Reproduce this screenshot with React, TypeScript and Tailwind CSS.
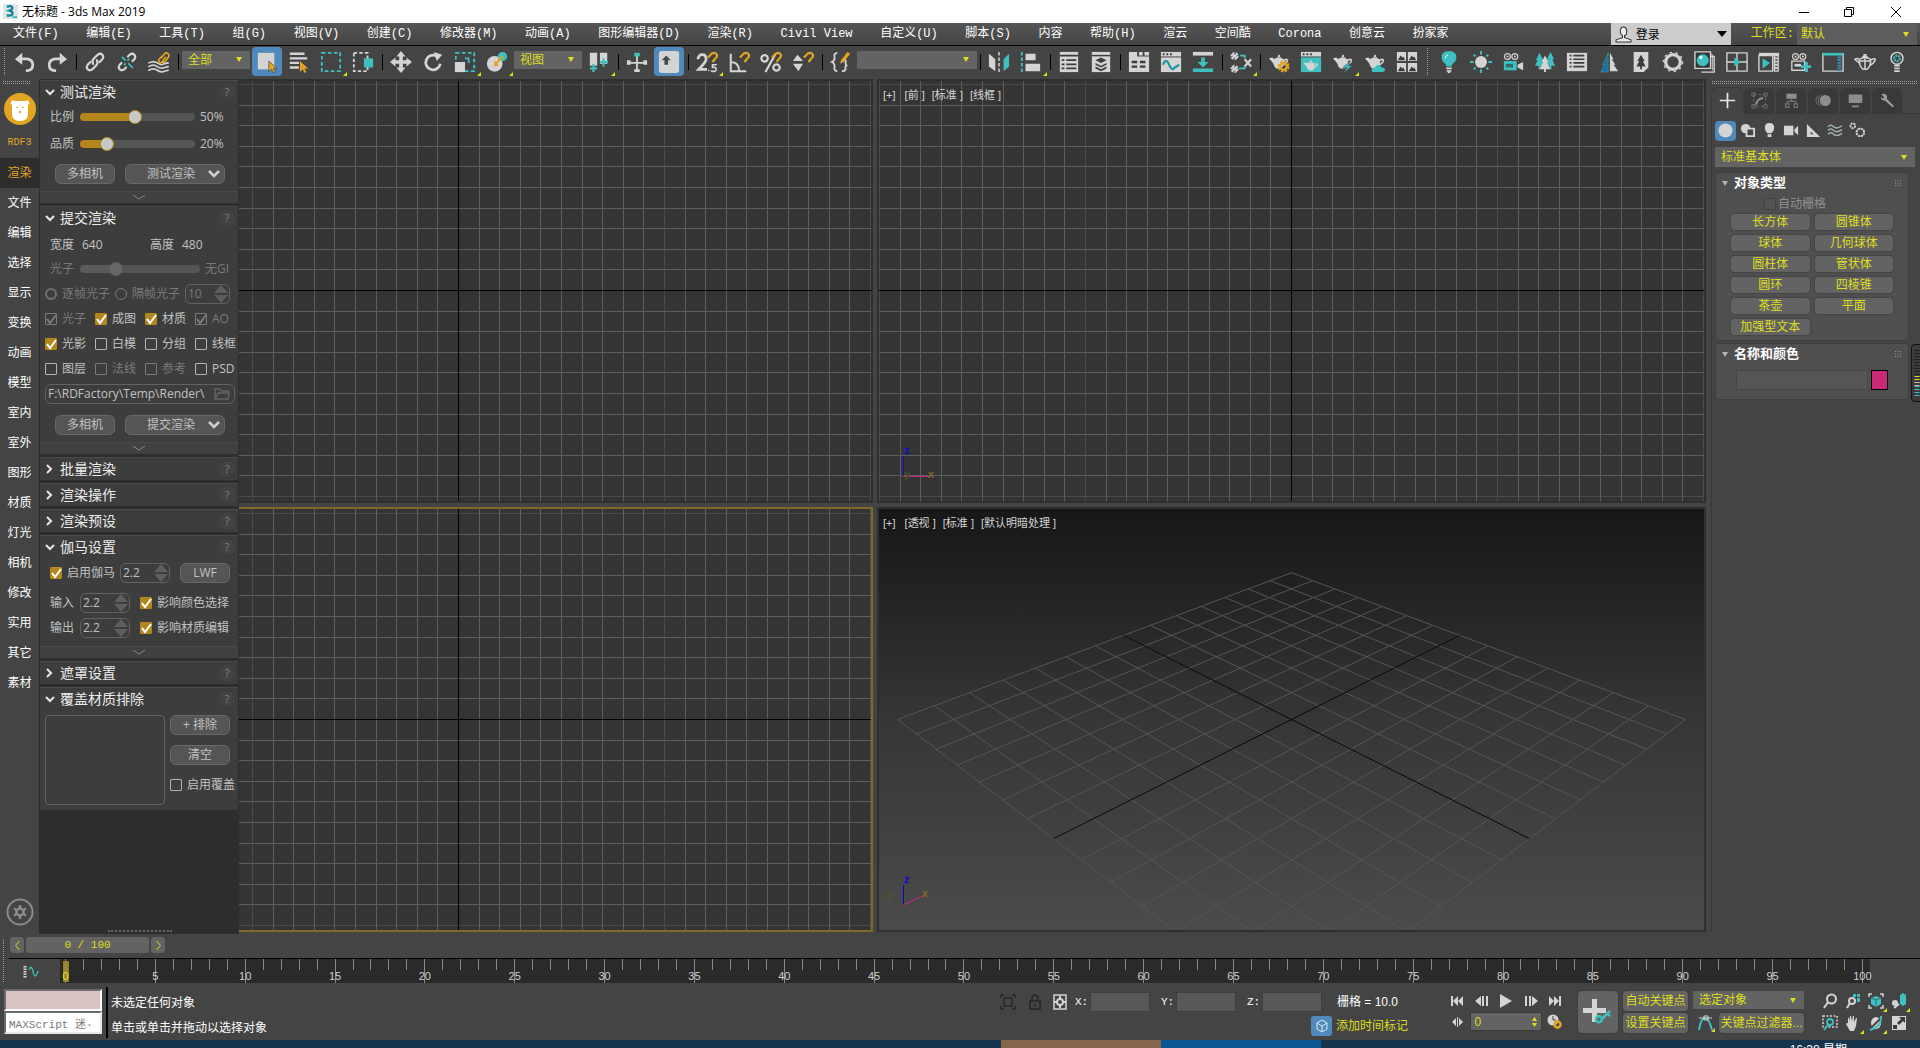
import React, { useState } from "react";

const W = "#d4d4d4";
const T = "#3fc0c0";
const G = "#e2a521";

const teapot = (
  <>
    <path d="M1 8l4-1 4 5-1 4zM9 7l2-1 0-2h2v2l2 1z" fill={W} />
    <path d="M6 9q6-4 11 0 2 6-3 10H9Q5 16 6 9z" fill={W} />
    <path d="M17 10q5-2 4 1t-6 5" fill="none" stroke={W} strokeWidth="1.8" />
  </>
);

const magnet = <path d="M13 7l4-4q3-2 5 0t0 4l-4 5" fill="none" stroke={G} strokeWidth="2.4" />;

const camera = (
  <>
    <circle cx="6" cy="6" r="3.2" fill="none" stroke={W} strokeWidth="1.3" />
    <circle cx="14" cy="6" r="3.2" fill="none" stroke={W} strokeWidth="1.3" />
    <path d="M6 6h.1M14 6h.1" stroke={W} strokeWidth="2" strokeLinecap="round" />
  </>
);

const icons: Record<string, React.ReactNode> = {
  undo: <path d="M1 9l8-7v5h5q8 1 8 8t-7 8h-2v-3h2q4-1 4-5t-5-5H9v5z" fill={W} />,
  redo: <path d="M23 9l-8-7v5h-5q-8 1-8 8t7 8h2v-3H9q-4-1-4-5t5-5h5v5z" fill={W} />,
  link: (
    <g fill="none" stroke={W} strokeWidth="2.4" strokeLinecap="round">
      <path d="M10 14q-2-3 1-6l4-4q3-2 5 0t0 5l-3 3" />
      <path d="M14 10q2 3-1 6l-4 4q-3 2-5 0t0-5l3-3" />
    </g>
  ),
  unlink: (
    <g fill="none" strokeWidth="2.4" strokeLinecap="round">
      <path d="M13 6l2-2q3-2 5 0t0 5l-2 2M11 18l-2 2q-3 2-5 0t0-5l2-2" stroke={W} />
      <path d="M7 7l3 3M14 14l4 4M14 9l-1 1M9 15l1-1" stroke={T} strokeWidth="1.8" />
    </g>
  ),
  bindWave: (
    <g fill="none" strokeLinecap="round">
      <path d="M1 13q5-3 9 0t7 1l5-1M1 17q5-3 9 0t8 1l4-1M1 21q5-3 9 0t8 1l4-1" stroke={W} strokeWidth="1.8" />
      <path d="M15 7l3-4q2-2 4 0t0 4l-3 4q-2 2-4 1M19 7l-4 5q-2 2-3 0t1-4l2-2" stroke={G} strokeWidth="1.8" />
    </g>
  ),
  selectObj: (
    <>
      <path d="M2 2h18v18H2z" fill={W} />
      <path d="M14 11v12l3-3 2 4 2-1-2-4h4z" fill={G} stroke="#3f3f3f" strokeWidth=".7" />
    </>
  ),
  selectName: (
    <>
      <path d="M2 3h16M2 8h19M2 13h10M2 18h10" stroke={W} strokeWidth="2.6" />
      <path d="M13 11v12l3-3 2 4 2-1-2-4h4z" fill={G} />
    </>
  ),
  rectRegion: <path d="M2 2h20v20H2z" fill="none" stroke={T} strokeWidth="2" strokeDasharray="4 2.6" />,
  windowCross: (
    <>
      <path d="M2 2h15v20H2z" fill="none" stroke={W} strokeWidth="2" strokeDasharray="3.6 2.4" />
      <path d="M13 8h10v10H13z" fill={T} />
    </>
  ),
  move: <path d="M12 0l5 6h-3v4h4V7l6 5-6 5v-3h-4v4h3l-5 6-5-6h3v-4H6v3l-6-5 6-5v3h4V6H7z" fill={W} />,
  rotate: (
    <>
      <path d="M16 5.500A8 8 0 1 0 20 14" fill="none" stroke={W} strokeWidth="3" />
      <path d="M13 1l9 3-6 7z" fill={W} />
    </>
  ),
  scale: (
    <>
      <path d="M2 2h20v20H2z" fill="none" stroke={T} strokeWidth="2" strokeDasharray="4 2.6" />
      <path d="M1 12h11v11H1z" fill={W} />
      <path d="M12 8h4v5" fill="none" stroke={T} strokeWidth="1.8" />
    </>
  ),
  place: (
    <>
      <circle cx="9.500" cy="14" r="8.500" fill={W} />
      <circle cx="18" cy="6" r="5" fill={T} />
      <path d="M9 17v-7l2 2 6-7 2 2-7 7 2 2z" fill={G} />
    </>
  ),
  pivot: (
    <>
      <path d="M2 2h8v14H2zM13 2h8v12h-8z" fill={W} />
      <path d="M6 14v9M2 19h8M17 8v9M13 12h9" stroke={T} strokeWidth="2.4" />
    </>
  ),
  manipulate: (
    <>
      <path d="M12 5v17M3 13h18" stroke={W} strokeWidth="2" />
      <path d="M9 2h6v4H9z" fill={T} />
      <path d="M1 10h4v5H1zM19 10h4v5h-4zM9 20h6v3H9z" fill={W} />
    </>
  ),
  keyboard: (
    <>
      <rect x="1" y="0" width="22" height="24" rx="3" fill={W} />
      <path d="M9 5l5 5h-3v5H7v-5H4z" fill="#484848" />
    </>
  ),
  snap: (
    <>
      <path d="M2 9q1-5 5-5t4 5q0 3-8 11h9" fill="none" stroke={W} strokeWidth="3" />
      <path d="M14 21h.1M22 15h-4v3q4-1 4 2t-5 2" fill="none" stroke={W} strokeWidth="1.8" strokeLinecap="round" />
      {magnet}
    </>
  ),
  angle: (
    <>
      <path d="M3 3v19h17M3 12q9 0 9 10" fill="none" stroke={W} strokeWidth="2.200" />
      {magnet}
    </>
  ),
  percent: (
    <>
      <path d="M17 3L6 23" stroke={W} strokeWidth="2.4" />
      <circle cx="5" cy="8" r="3.500" fill="none" stroke={W} strokeWidth="2.4" />
      <circle cx="18" cy="18" r="3.500" fill="none" stroke={W} strokeWidth="2.4" />
      {magnet}
    </>
  ),
  spinnerSnap: (
    <>
      <path d="M1 11l5-7 6 7zM1 14h11l-5 8z" fill={W} />
      {magnet}
    </>
  ),
  namedSets: (
    <>
      <path d="M8 2q-4 0-3 5 0 4-3 5 3 1 3 5-1 5 3 5M14 9q4 0 3 4 0 3 2 3-3 0-2 3 0 3-4 3" fill="none" stroke={W} strokeWidth="2" />
      <path d="M11 14l1-4 7-9 3 2-7 9z" fill={G} />
    </>
  ),
  mirror: (
    <>
      <path d="M1 3l7 6v13l-7-5z" fill={W} />
      <path d="M23 3l-6 6v13l6-5z" fill={T} />
      <path d="M12 1v22" stroke={W} strokeWidth="1.6" strokeDasharray="4 2" />
    </>
  ),
  align: (
    <>
      <path d="M2 1v22" stroke={T} strokeWidth="2" strokeDasharray="4 2" />
      <path d="M6 3h11v7H6zM6 14h16v8H6z" fill={W} />
    </>
  ),
  sceneExplorer: (
    <>
      <path d="M2 1h20v22H2z" fill={W} />
      <path d="M2 5h20M4 10h3M9 10h11M4 14.500h3M9 14.500h11M4 19h3M9 19h11" stroke="#3c3c3c" strokeWidth="2" />
    </>
  ),
  layers: (
    <>
      <path d="M2 1h20v22H2z" fill={W} />
      <path d="M2 5h20" stroke="#3c3c3c" strokeWidth="1.600" />
      <path d="M12 7l6 3-6 3-6-3zM6 13l6 3 6-3v2l-6 3-6-3zM6 17l6 3 6-3v2l-6 3-6-3z" fill="#3c3c3c" />
    </>
  ),
  ribbon: (
    <>
      <path d="M1 1h9v5H1zM12 1h4v4h-4zM18 1h5v4h-5zM1 6h22v17H1z" fill={W} />
      <path d="M4 12h6M13 12h6M4 17h6M13 17h6" stroke="#3c3c3c" strokeWidth="2.6" />
    </>
  ),
  curve: (
    <>
      <path d="M1 1h22v22H1z" fill={W} />
      <path d="M3 3.500h2M7 3.500h2M11 3.500h2" stroke="#3c3c3c" strokeWidth="2" />
      <path d="M1 6.500h22" stroke="#3c3c3c" />
      <path d="M3 15q3-7 6-2 4 10 7 5l5-3" fill="none" stroke="#1f93a6" strokeWidth="2.4" />
    </>
  ),
  schematic: (
    <>
      <path d="M1 1h22v4H1z" fill={W} />
      <path d="M1 19h22v4H1zM10 7h4v5h4l-6 6-6-6h4z" fill={T} />
    </>
  ),
  material: (
    <g fill="none" strokeWidth="1.8">
      <path d="M2 3l6 5M8 3l-6 5M2 17l6 5M8 17l-6 5M16 9l7 8M23 9l-7 8" stroke={W} strokeWidth="2.400" />
      <path d="M11 5h5v3M10 19h6v-3" stroke={T} strokeWidth="2" />
      <circle cx="5" cy="5.500" r="3.500" stroke={W} strokeDasharray="2 1.500" />
      <circle cx="5" cy="19.500" r="3.500" stroke={W} strokeDasharray="2 1.500" />
    </g>
  ),
  renderSetup: (
    <>
      {teapot}
      <circle cx="17" cy="17" r="5" fill="none" stroke={G} strokeWidth="3" strokeDasharray="2.500 1.400" />
      <circle cx="17" cy="17" r="3.500" fill="none" stroke={G} strokeWidth="2.400" />
    </>
  ),
  renderFrame: (
    <>
      <path d="M1 1h22v5H1z" fill={W} />
      <path d="M3 3.500h2M7 3.500h2M11 3.500h2" stroke="#3c3c3c" strokeWidth="2" />
      <path d="M1 7h22v16H1z" fill={T} />
      <g transform="translate(3 7) scale(.75)">{teapot}</g>
    </>
  ),
  renderProd: (
    <>
      {teapot}
      <path d="M20 11l-8 7h4l-3 6 9-8h-4z" fill={T} stroke="#454545" strokeWidth=".6" />
    </>
  ),
  renderCloud: (
    <>
      {teapot}
      <path d="M10 23q-3-1-1-4 1-1 3-1 2-5 6-2 1 1 1 2 4 0 4 3-1 2-3 2z" fill={T} />
    </>
  ),
  gallery: (
    <>
      <path d="M1 1h10v10H1zM13 1h10v10H13zM1 13h10v10H1zM13 13h10v10H13z" fill={W} />
      <path d="M2 10l3-5 2 2 1-1 2 4zM14 10l3-5 2 2 1-1 2 4zM2 22l3-5 2 2 1-1 2 4zM14 22l3-5 2 2 1-1 2 4z" fill="#3c3c3c" />
    </>
  ),
  bulb: (
    <>
      <path d="M12 0q8 0 8 7 0 4-4 7-1 1-1 3H9q0-2-1-3-4-3-4-7 0-7 8-7z" fill={T} />
      <path d="M9 18h6v2H9zM9 21h6l-2 3h-2z" fill={W} />
      <path d="M8 8q0-3 3-4" stroke="#fff" fill="none" />
    </>
  ),
  sun: (
    <>
      <circle cx="12" cy="12" r="6.500" fill={W} />
      <path d="M12 0v4M12 20v4M0 12h4M20 12h4M4 4l2 2M18 18l2 2M4 20l2-2M18 6l2-2" stroke={T} strokeWidth="2" />
    </>
  ),
  vcam: (
    <>
      {camera}
      <path d="M2 11h14v10H2z" fill={T} />
      <path d="M4 14h8v4H4z" fill="#2d6f70" />
      <path d="M17 15l6-3v9l-6-3z" fill={W} />
    </>
  ),
  trees: (
    <>
      <path d="M6 2l4 8H8l3 6H7v4H5v-4H1l3-6H2zM18 1l4 8h-2l3 7h-4v4h-2v-4h-4l3-7h-2z" fill={T} />
      <path d="M12 5l4 7h-2l4 8h-5v3h-2v-3H6l4-8H8z" fill={W} />
    </>
  ),
  listPanel: (
    <>
      <path d="M1 2h22v20H1z" fill={W} />
      <path d="M4 5h2M8 5h12M4 9h2M8 9h12M4 13h2M8 13h12M4 17h2M8 17h12" stroke="#3c3c3c" strokeWidth="1.8" />
    </>
  ),
  halfTree: (
    <>
      <path d="M11 2v21H3l4-8H5l4-8z" fill="#1f6fa0" stroke={T} strokeDasharray="1 1.500" />
      <path d="M13 2l4 7h-2l4 6h-2l5 7h-9z" fill={W} />
    </>
  ),
  treeCard: (
    <>
      <path d="M4 1h16v17l-5 5H4z" fill={W} />
      <path d="M12 4l4 7h-2l3 6h-4v3h-2v-3H7l3-6H8z" fill="#3c3c3c" />
    </>
  ),
  ring: (
    <>
      <circle cx="12" cy="12" r="8" fill="none" stroke={W} strokeWidth="3.600" />
      <circle cx="12" cy="12" r="10.500" fill="none" stroke={W} strokeWidth="1.500" strokeDasharray="2.500 4" />
    </>
  ),
  sphereStack: (
    <>
      <path d="M6 6h16v17H8" fill="none" stroke={W} strokeWidth="1.5" />
      <path d="M4 4h16v17" fill="none" stroke={W} />
      <path d="M1 1h17v18H1z" fill="#333" stroke={W} strokeWidth="1.5" />
      <circle cx="9.500" cy="10" r="6.500" fill={T} />
      <circle cx="7.500" cy="7" r="1.800" fill="#e9ffff" />
    </>
  ),
  playGrid: (
    <>
      <path d="M1 2h22v20H1zM12 2v20M1 12h22" fill="none" stroke={W} strokeWidth="1.5" />
      <path d="M9 7l7 5-7 5z" fill={T} />
    </>
  ),
  playPanel: (
    <>
      <path d="M1 2h22v3H1z" fill={W} />
      <path d="M1 5h15v17H1zM18 5h4v17h-4z" fill="none" stroke={W} strokeWidth="1.500" />
      <path d="M5 8l8 5-8 6z" fill={T} />
      <path d="M20 7v14" stroke={W} strokeWidth="3" strokeDasharray="2 1.500" />
    </>
  ),
  addCam: (
    <>
      {camera}
      <path d="M2 11h14v10H2z" fill="none" stroke={W} strokeWidth="1.500" />
      <path d="M5 14h7v3H5z" fill={W} />
      <path d="M18 12v11M12 17h11" stroke={T} strokeWidth="3" />
    </>
  ),
  sidePanel: (
    <>
      <path d="M1 3h22v19H1z" fill="none" stroke={W} strokeWidth="1.500" />
      <path d="M1 2h22v3H1z" fill={T} />
      <path d="M19 6v16" stroke="#3c8fc0" strokeWidth="4" strokeDasharray="2 1" />
    </>
  ),
  teapotLine: (
    <g fill="none" stroke={W} strokeWidth="1.600">
      <path d="M6 9q6-4 12 0 1 7-4 11h-4Q5 16 6 9zM9 7l2-1V4h2v2l2 1M7 14L1 9l3-1 2 2M18 10q6-3 5 0t-6 6M12 7v13M6 11h12" />
    </g>
  ),
  bulbGear: (
    <>
      <circle cx="12" cy="8" r="6.500" fill="none" stroke={W} strokeWidth="1.600" />
      <circle cx="12" cy="8" r="3" fill="none" stroke={T} strokeWidth="2.500" strokeDasharray="2 1" />
      <path d="M9 16h6M9 19h6M9 22h6" stroke={W} strokeWidth="2" />
    </>
  ),
};

const Icon = ({ name, size = 24 }: { name: string; size?: number }) => (
  <svg viewBox="0 0 24 24" width={size} height={size} aria-hidden="true">
    {icons[name]}
  </svg>
);

// "|" is a separator, ":" is a dotted grip, a leading "*" is a pressed tool, a trailing "+" has a flyout
const toolbar = [
  "undo", "redo", "|", "link", "unlink", "bindWave", "|", "combo:全部", "*selectObj", "selectName", "rectRegion+",
  "windowCross", "|", "move", "rotate", "scale+", "place+", "combo:视图", "pivot+", "|", "manipulate", "*keyboard", "|",
  "snap+", "angle", "percent", "spinnerSnap", "|", "namedSets", "combo:", "|", "mirror", "align+", "|", "sceneExplorer",
  "layers", "|", "ribbon", "curve", "schematic", "|", "material+", "|", "renderSetup", "renderFrame", "renderProd+",
  "renderCloud", "gallery", ":", "bulb", "sun", "vcam", "trees", "listPanel", "halfTree", "treeCard", "ring",
  "sphereStack", "playGrid", "playPanel", "addCam", "sidePanel", "teapotLine", "bulbGear",
];

const menus = [
  "文件(F)", "编辑(E)", "工具(T)", "组(G)", "视图(V)", "创建(C)", "修改器(M)", "动画(A)", "图形编辑器(D)", "渲染(R)",
  "Civil View", "自定义(U)", "脚本(S)", "内容", "帮助(H)", "渲云", "空间酷", "Corona", "创意云", "扮家家",
];

const sideTabs = [
  "渲染", "文件", "编辑", "选择", "显示", "变换", "动画", "模型", "室内",
  "室外", "图形", "材质", "灯光", "相机", "修改", "实用", "其它", "素材",
];

const primitives = ["长方体", "圆锥体", "球体", "几何球体", "圆柱体", "管状体", "圆环", "四棱锥", "茶壶", "平面", "加强型文本"];

// fine dotted handle used to drag docked bars
const Grip = ({ className }: { className: string }) => (
  <span className={`bg-[conic-gradient(#a0a0a0_25%,transparent_0)] bg-[length:2px_2px] ${className}`} />
);

interface ComboProps {
  label: string;
  value: string;
  className?: string;
}

const Combo = ({ label, value, className = "" }: ComboProps) => (
  <div className={`grid items-center ${className}`}>
    <select
      aria-label={label}
      className="h-full w-full min-w-0 appearance-none bg-[#636363] pl-1.5 text-[12px] leading-4 text-[#dfdf1e] [grid-area:1/1]"
    >
      <option>{value}</option>
    </select>
    <svg viewBox="0 0 6 5" width="6" height="5" className="pointer-events-none mr-2 justify-self-end [grid-area:1/1]">
      <path d="M0 0h6L3 5z" fill="#dfdf1e" />
    </svg>
  </div>
);

const TitleBar = () => (
  <header className="flex h-[23px] shrink-0 items-center bg-white pl-[3px] text-black">
    <svg viewBox="0 0 16 16" width="15" height="15">
      <path d="M0 0h16v16H0z" fill="#dfe6ea" />
      <path d="M4 3q5-2 6 1 0 2-3 3 4 1 3 4-2 2-6 1" fill="none" stroke="#15839a" strokeWidth="2.500" />
      <path d="M10 13h5v2h-5z" fill="#35c0c0" />
    </svg>
    <h1 className="ml-1 flex-1 font-['Open_Sans','Noto_Sans_CJK_SC',sans-serif] text-[12px] leading-5">无标题 - 3ds Max 2019</h1>
    <div className="flex">
      <button aria-label="最小化" className="grid h-5 w-[45px] place-items-center">
        <svg width="10" height="10"><path d="M0 5.500h10" stroke="#000" /></svg>
      </button>
      <button aria-label="还原" className="grid h-5 w-[45px] place-items-center">
        <svg width="10" height="10" fill="none" stroke="#000"><path d="M.5 2.500h7v7h-7zM2.500 2.500v-2h7v7h-2" /></svg>
      </button>
      <button aria-label="关闭" className="grid h-5 w-[49px] place-items-center">
        <svg width="10" height="10" stroke="#000"><path d="M0 0l10 10M10 0L0 10" /></svg>
      </button>
    </div>
  </header>
);

const MenuBar = () => (
  <nav className="flex h-[23px] shrink-0 border-b border-black bg-linear-to-b from-[#565656] to-[#444444]">
    <div className="flex flex-1 items-center justify-between pr-[162px] pb-px pl-[13px] font-['Liberation_Mono','Noto_Sans_CJK_SC',monospace] text-[12px] leading-4 text-white">
      {menus.map((menu) => (
        <button key={menu} className="whitespace-nowrap">{menu}</button>
      ))}
    </div>
    <button className="flex w-[120px] items-center bg-[#cccccc] pl-1 text-[12px] text-black">
      <svg viewBox="0 0 16 16" width="17" height="17" fill="#eee" stroke="#333">
        <path d="M5 5q0-4 3-4t3 4-2 4v2l6 2v2H1v-2l6-2V9Q5 8 5 5z" />
      </svg>
      <span className="mt-0.5 ml-1 flex-1 text-left">登录</span>
      <svg width="10" height="6" className="mr-1"><path d="M0 0h10L5 6z" /></svg>
    </button>
    <label htmlFor="workspace" className="pl-5 font-['Liberation_Mono','Noto_Sans_CJK_SC',monospace] text-[12px] leading-[22px] text-[#dfdf1e]">工作区:</label>
    <div className="mr-[3px] ml-[3px] grid w-[120px] items-center">
      <select id="workspace" className="h-full appearance-none bg-[#5d5d5d] pl-1 text-[12px] text-[#dfdf1e] [grid-area:1/1]">
        <option>默认</option>
      </select>
      <svg width="6" height="5" className="pointer-events-none mr-2 justify-self-end [grid-area:1/1]"><path d="M0 0h6L3 5z" fill="#dfdf1e" /></svg>
    </div>
  </nav>
);

const Toolbar = () => (
  <div className="flex h-[33px] shrink-0 items-center bg-[#444444] pb-0.5 pl-[3px]">
    <Grip className="mr-[3px] h-[27px] w-[3px]" />
    {toolbar.map((item, i) => {
      if (item === "|") {
        return (
          <span key={i} className="flex w-1.5 justify-center">
            <span className="h-4 w-px bg-black" />
          </span>
        );
      }
      if (item === ":") {
        return <Grip key={i} className="mr-1 ml-[3px] h-[27px] w-[3px]" />;
      }
      if (item.startsWith("combo:")) {
        const value = item.slice(6);
        return (
          <Combo
            key={i}
            label={value || "命名选择集"}
            value={value}
            className={value ? "mx-px mb-1 h-[18px] w-[68px]" : "mb-1 h-[18px] w-[120px]"}
          />
        );
      }
      const pressed = item.startsWith("*");
      const name = item.replace("*", "").replace("+", "");
      return (
        <button key={i} aria-label={name} className="relative grid h-[31px] w-8 shrink-0 place-items-center">
          <span className={`grid h-[29px] w-[30px] place-items-center rounded-sm ${pressed ? "bg-[#5089bb]" : ""}`}>
            <Icon name={name} size={22} />
          </span>
          {item.endsWith("+") && (
            <svg width="4" height="4" className="absolute right-0 bottom-px"><path d="M4 0v4H0z" fill="#dfdf1e" /></svg>
          )}
        </button>
      );
    })}
  </div>
);

const SideStrip = () => (
  <aside className="flex w-10 shrink-0 flex-col items-center border-r border-[#2d2d2d] bg-[#444444]">
    <Grip className="mt-0.5 mb-[9px] ml-0.5 h-[3px] w-7 shrink-0 self-start" />
    <svg viewBox="0 0 32 32" width="32" height="32" className="shrink-0">
      <circle cx="16" cy="16" r="16" fill="#e3a622" />
      <path d="M7 9q1-3 4-1h10q3-2 4 1 1 2-1 3v10q-1 6-8 6t-8-6V12q-2-1-1-3z" fill="#fff" />
      <path d="M12 14h2v1h-2zM18 14h2v1h-2zM15 18h2v2h-2z" fill="#e3a622" />
    </svg>
    <span className="mt-[3px] font-['Liberation_Mono',monospace] text-[10px] leading-[30px] text-[#e3a622]">RDF3</span>
    {sideTabs.map((tab, i) => (
      <button
        key={tab}
        className={`w-full text-[12px] leading-[30px] ${i === 0 ? "bg-[#2d2d2d] text-[#e3a622]" : "text-white"}`}
      >
        {tab}
      </button>
    ))}
    <button aria-label="设置" className="mt-auto mb-2">
      <svg viewBox="0 0 28 28" width="28" height="28" fill="none" stroke="#8b8b8b">
        <circle cx="14" cy="14" r="12.500" strokeWidth="2" />
        <circle cx="14" cy="14" r="3.500" strokeWidth="2.500" />
        <path d="M14 7v3M14 18v3M8 10.500l2.500 1.500M17.500 16l2.500 1.500M8 17.500l2.500-1.500M17.500 12l2.500-1.500" strokeWidth="2.500" />
      </svg>
    </button>
  </aside>
);

interface CheckProps {
  label: string;
  checked?: boolean;
  dim?: boolean;
}

const Check = ({ label, checked = false, dim = false }: CheckProps) => {
  const [on, setOn] = useState(checked);
  const border = dim ? "border-[#7b7b7b]" : on ? "border-[#b3871c] bg-[#b3871c]" : "border-[#b4b4b4]";
  return (
    <label className={`flex items-center gap-[5px] whitespace-nowrap ${dim ? "text-[#7a7a7a]" : ""}`}>
      <span className="grid">
        <input
          type="checkbox"
          checked={on}
          disabled={dim}
          onChange={() => setOn(!on)}
          className={`h-3 w-3 appearance-none rounded-[1px] border [grid-area:1/1] ${border}`}
        />
        {on && (
          <svg width="12" height="12" fill="none" stroke={dim ? "#7b7b7b" : "#fff"} strokeWidth="2" className="pointer-events-none [grid-area:1/1]">
            <path d="M2 6l3 4 6-8" />
          </svg>
        )}
      </span>
      {label}
    </label>
  );
};

const Spin = ({ label, value, dim = false }: { label: string; value: string; dim?: boolean }) => (
  <div className={`flex h-5 items-center rounded-md border border-[#626262] pr-px ${dim ? "w-[45px] text-[#7a7a7a]" : "w-[50px]"}`}>
    <input aria-label={label} defaultValue={value} disabled={dim} className="w-0 min-w-0 flex-1 pl-0.5" />
    <svg width="14" height="18" fill="#5e5e5e"><path d="M0 8l7-8 7 8zM0 10h14l-7 8z" /></svg>
  </div>
);

const Slider = ({ label, value, dim = false }: { label: string; value: number; dim?: boolean }) => {
  const [pos, setPos] = useState(value);
  const fill = dim ? "#5a5a5a" : "#b3871c";
  return (
    <input
      type="range"
      aria-label={label}
      value={pos}
      disabled={dim}
      onChange={(e) => setPos(Number(e.target.value))}
      style={{ background: `linear-gradient(to right, ${fill} ${pos}%, #555555 ${pos}%)` }}
      className={`h-2 min-w-0 flex-1 appearance-none rounded-full [&::-webkit-slider-thumb]:h-3.5 [&::-webkit-slider-thumb]:w-3.5 [&::-webkit-slider-thumb]:appearance-none [&::-webkit-slider-thumb]:rounded-full [&::-webkit-slider-thumb]:border ${
        dim
          ? "[&::-webkit-slider-thumb]:border-[#5f5f5f] [&::-webkit-slider-thumb]:bg-[#666666]"
          : "[&::-webkit-slider-thumb]:border-[#b3871c] [&::-webkit-slider-thumb]:bg-[#c9c9c9]"
      }`}
    />
  );
};

const Pill = ({ children, className = "" }: { children: React.ReactNode; className?: string }) => (
  <button className={`flex h-5 items-center justify-center rounded-md border border-[#686868] bg-[#555555] ${className}`}>{children}</button>
);

const RenderButtons = ({ label }: { label: string }) => (
  <div className="flex gap-2.5 pl-2.5">
    <Pill className="w-[60px]">多相机</Pill>
    <Pill className="w-[100px]">
      <span className="flex-1 pl-2">{label}</span>
      <svg width="12" height="8" className="mr-1" fill="none" stroke="#d0d0d0" strokeWidth="2.500"><path d="M1 1l5 5 5-5" /></svg>
    </Pill>
  </div>
);

interface SectionProps {
  title: string;
  more?: boolean;
  children?: React.ReactNode;
}

const Section = ({ title, more = false, children }: SectionProps) => (
  <section className="mb-[3px] border-t border-[#4a4a4a] bg-[#3d3d3d]">
    <div className="flex h-[22px] items-center pr-[3px] pl-[5px]">
      <svg width="10" height="10" fill="none" stroke="#e8e8e8" strokeWidth="2">
        <path d={children ? "M1 3l4 4 4-4" : "M2 1l4 4-4 4"} />
      </svg>
      <h2 className="ml-[5px] flex-1 text-[14px] leading-[22px] text-[#ececec]">{title}</h2>
      <button aria-label={`${title}帮助`} className="h-4 w-4 rounded-full bg-[#424242] text-[11px] leading-4 text-[#808080]">?</button>
    </div>
    {children && <div className="pl-[5px]">{children}</div>}
    {more && (
      <button aria-label="展开" className="grid h-3 w-full place-items-center border-t border-[#4a4a4a] bg-[#414141]">
        <svg width="12" height="5" fill="none" stroke="#888"><path d="M0 0l6 4 6-4" /></svg>
      </button>
    )}
  </section>
);

const RenderPanel = () => (
  <div className="flex w-[199px] shrink-0 flex-col bg-[#2d2d2d] pt-px pr-px font-['Open_Sans','Noto_Sans_CJK_SC',sans-serif] text-[12px] leading-4 text-[#c2c2c2]">
    <Section title="测试渲染" more>
      <div className="flex h-[28px] items-center pl-[5px]">
        <span className="w-[30px]">比例</span>
        <Slider label="比例" value={48} />
        <span className="w-[43px] pl-[5px]">50%</span>
      </div>
      <div className="flex h-[25px] items-center pl-[5px]">
        <span className="w-[30px]">品质</span>
        <Slider label="品质" value={20} />
        <span className="w-[43px] pl-[5px]">20%</span>
      </div>
      <div className="pt-2 pb-[7px]"><RenderButtons label="测试渲染" /></div>
    </Section>

    <Section title="提交渲染" more>
      <div className="flex h-8 items-center pl-[5px]">
        <label htmlFor="rw" className="w-8">宽度</label>
        <input id="rw" defaultValue="640" className="w-[68px] min-w-0" />
        <label htmlFor="rh" className="w-8">高度</label>
        <input id="rh" defaultValue="480" className="w-12 min-w-0" />
      </div>
      <div className="flex h-4 items-center pl-[5px] text-[#7a7a7a]">
        <span className="w-[30px]">光子</span>
        <Slider label="光子" value={27} dim />
        <span className="w-[38px] pl-[5px] whitespace-nowrap">无GI</span>
      </div>
      <div className="mt-[7px] flex h-5 items-center text-[#7a7a7a]">
        <label className="flex w-[70px] items-center gap-[5px] whitespace-nowrap">
          <input type="radio" name="photon" disabled className="h-3 w-3 appearance-none rounded-full border-2 border-[#6d7272]" />
          逐帧光子
        </label>
        <label className="flex w-[70px] items-center gap-[5px] whitespace-nowrap">
          <input type="radio" name="photon" disabled className="h-3 w-3 appearance-none rounded-full border border-[#7b7b7b]" />
          隔帧光子
        </label>
        <Spin label="隔帧数" value="10" dim />
      </div>
      <div className="grid grid-cols-[50px_50px_50px_43px] pt-0.5">
        {["光子!x", "成图x", "材质x", "AO!x", "光影x", "白模", "分组", "线框", "图层", "法线!", "参考!", "PSD"].map((item) => (
          <div key={item} className="flex h-[25px] items-center">
            <Check label={item.replace(/[!x]/g, "")} checked={item.endsWith("x")} dim={item.includes("!")} />
          </div>
        ))}
      </div>
      <div className="mt-[3px] flex h-5 w-[190px] items-center rounded-md border border-[#626262] pr-1 pl-0.5">
        <input aria-label="输出路径" defaultValue="F:\RDFactory\Temp\Render\" className="min-w-0 flex-1" />
        <svg width="16" height="14" fill="none" stroke="#626262" strokeWidth="1.500"><path d="M1 12V2h5l1 2h7v2M1 12h13l1-6H4z" /></svg>
      </div>
      <div className="pt-[11px] pb-[7px]"><RenderButtons label="提交渲染" /></div>
    </Section>

    <Section title="批量渲染" />
    <Section title="渲染操作" />
    <Section title="渲染预设" />

    <Section title="伽马设置" more>
      <div className="flex items-center pt-[5px] pl-[5px]">
        <div className="w-[70px]"><Check label="启用伽马" checked /></div>
        <Spin label="伽马" value="2.2" />
        <Pill className="ml-2.5 w-[50px]">LWF</Pill>
      </div>
      <div className="mt-2.5 flex items-center pl-[5px]">
        <span className="w-[30px]">输入</span>
        <Spin label="输入" value="2.2" />
        <div className="ml-2.5"><Check label="影响颜色选择" checked /></div>
      </div>
      <div className="mt-[5px] flex items-center pb-2 pl-[5px]">
        <span className="w-[30px]">输出</span>
        <Spin label="输出" value="2.2" />
        <div className="ml-2.5"><Check label="影响材质编辑" checked /></div>
      </div>
    </Section>

    <Section title="遮罩设置" />

    <Section title="覆盖材质排除">
      <div className="flex gap-[5px] pt-[5px] pb-[5px]">
        <div className="h-[90px] w-[120px] rounded-sm border border-[#626262]" />
        <div className="flex flex-col gap-2.5">
          <Pill className="w-[60px]">+ 排除</Pill>
          <Pill className="w-[60px]">清空</Pill>
          <div className="pt-0.5"><Check label="启用覆盖" /></div>
        </div>
      </div>
    </Section>
    <span className="mt-auto mb-0.5 ml-[68px] h-0.5 w-16 border-t-2 border-dotted border-[#666666]" />
  </div>
);

const steps = Array.from({ length: 81 }, (_, i) => i - 40);

// world grid seen straight on; every tenth line is drawn darker
const FlatGrid = ({ x, y }: { x: number; y: number }) => (
  <svg width="100%" height="100%" className="absolute inset-0" shapeRendering="crispEdges">
    {[...steps.filter((n) => n % 10 === 0), ...steps.filter((n) => n % 10 !== 0)].map((n) => {
      const d = Math.round(n * 20.6) + 0.5;
      const color = n % 10 === 0 ? "#4a4a4a" : "#5e5e5e";
      return (
        <g key={n} stroke={color}>
          <path d={`M${x + d} 0v900`} />
          <path d={`M0 ${y + d}h1600`} />
        </g>
      );
    })}
    <path d={`M${x + 0.5} 0v900M0 ${y + 0.5}h1600`} stroke="#000" />
  </svg>
);

const project = (u: number, v: number) => {
  const depth = 1 - 0.0246 * (u + v);
  return `${412.5 + (28.14 * (u - v)) / depth} ${210.5 + (14.09 * (u + v)) / depth}`;
};

const PerspectiveGrid = () => (
  <svg width="100%" height="100%" className="absolute inset-0">
    <g stroke="#555555">
      {Array.from({ length: 15 }, (_, i) => i - 7).map((n) => (
        <path key={n} d={`M${project(n, -7)}L${project(n, 7)}M${project(-7, n)}L${project(7, n)}`} />
      ))}
    </g>
    <path d={`M${project(0, -7)}L${project(0, 7)}M${project(-7, 0)}L${project(7, 0)}`} stroke="#000" />
  </svg>
);

const ViewLabels = ({ labels }: { labels: string[] }) => (
  <div className="relative flex gap-[7px] pt-1.5 pl-1 text-[11px] leading-4 text-[#d4d4d4]">
    {labels.map((label) => (
      <button key={label} className="whitespace-nowrap first:pr-0.5">[{label}]</button>
    ))}
  </div>
);

const AxisTripod = ({ perspective = false }: { perspective?: boolean }) => (
  <svg width="54" height="46" className="absolute bottom-[13px] left-1 font-['Liberation_Sans',sans-serif] text-[11px] font-bold">
    <path d="M20.500 34V14" stroke="#0b0bc4" />
    <path d={perspective ? "M20 34l20-9" : "M20 34.500h26"} stroke="#c92a78" />
    {perspective && <path d="M20 34l-12-6" stroke="#3c4f2c" />}
    <text x="21" y="12" fill="#0b0bd8">z</text>
    <text x={perspective ? 39 : 45} y={perspective ? 26 : 36} fill="#85692a">x</text>
    <text x={perspective ? 4 : 21} y={perspective ? 27 : 36} fill="#3f5c28">y</text>
  </svg>
);

const Viewports = () => (
  <main className="mb-0.5 grid min-w-0 flex-1 grid-cols-[634fr_829fr] grid-rows-[424fr_425fr] gap-1">
    <div className="relative overflow-hidden border-2 border-l-0 border-[#2f2f2f] bg-[#343434]">
      <FlatGrid x={219} y={209} />
    </div>
    <div className="relative overflow-hidden border-2 border-[#2f2f2f] bg-[#343434]">
      <FlatGrid x={412} y={209} />
      <ViewLabels labels={["+", "前 ", "标准 ", "线框 "]} />
      <AxisTripod />
    </div>
    <div className="relative overflow-hidden border-2 border-l-0 border-[#7f692c] bg-[#343434]">
      <FlatGrid x={219} y={210} />
    </div>
    <div className="relative overflow-hidden border-2 border-[#2f2f2f] bg-linear-to-b from-[#171717] via-[#363636] to-[#4b4b4b]">
      <PerspectiveGrid />
      <ViewLabels labels={["+", "透视 ", "标准 ", "默认明暗处理 "]} />
      <AxisTripod perspective />
    </div>
  </main>
);

const dimStroke = "#8d8d8d";

const panelTabs: { name: string; art: React.ReactNode }[] = [
  { name: "创建", art: <path d="M10 1v18M1 10h18" stroke="#e8e8e8" strokeWidth="2" /> },
  {
    name: "修改",
    art: (
      <g fill="none" stroke="#6d7475">
        <path d="M3 3h14v14H3z" strokeDasharray="3 3" />
        <path d="M1 1h4v4H1zM15 1h4v4h-4zM1 15h4v4H1zM15 15h4v4h-4z" />
        <path d="M6 15q1-7 8-8" stroke={dimStroke} strokeWidth="2.500" />
      </g>
    ),
  },
  {
    name: "层次",
    art: (
      <>
        <path d="M4 2h12v6H4z" fill={dimStroke} />
        <path d="M10 8v3M5 14v-3h10v3M3 14h4v4H3zM13 14h4v4h-4z" fill="none" stroke="#6d7475" strokeWidth="1.500" />
      </>
    ),
  },
  {
    name: "运动",
    art: (
      <>
        <circle cx="12" cy="10" r="6.500" fill={dimStroke} />
        <path d="M7 3q-7 7 0 14M4 4q-6 6 0 12" fill="none" stroke="#727272" />
      </>
    ),
  },
  { name: "显示", art: <path d="M2 3h16v10H2zM6 16h8v2H6z" fill={dimStroke} /> },
  { name: "实用程序", art: <path d="M3 3q3-2 6 1 1 2 0 4l8 8q1 2-1 2l-9-8q-4 1-5-4l3 2 1-2z" fill="#a0a0a0" /> },
];

const createKinds: { name: string; art: React.ReactNode }[] = [
  { name: "几何体", art: <circle cx="9" cy="9" r="7.500" fill={W} /> },
  {
    name: "图形",
    art: (
      <>
        <circle cx="7" cy="7" r="5" fill={W} />
        <path d="M8 7h8v8H8z" fill="none" stroke={W} strokeWidth="2" />
        <path d="M9 8h4l-1 4H9z" fill="#454545" />
      </>
    ),
  },
  { name: "灯光", art: <path d="M9 1q5 0 5 5 0 3-3 6H7Q4 9 4 6q0-5 5-5zM7 13h4v3H7z" fill={W} /> },
  { name: "摄影机", art: <path d="M1 4h10v10H1zM12 8l4-4v10l-4-4z" fill={W} /> },
  {
    name: "辅助对象",
    art: (
      <>
        <path d="M2 2v14h14z" fill={W} />
        <path d="M6 10v3h3z" fill="#454545" />
      </>
    ),
  },
  {
    name: "空间扭曲",
    art: <path d="M1 5q3-3 6 0t9-1M1 9q3-3 6 0t9-1M1 13q3-3 6 0t9-1" fill="none" stroke="#a5b5b5" strokeWidth="1.500" />,
  },
  {
    name: "系统",
    art: (
      <g fill="none" stroke={W} strokeWidth="2">
        <circle cx="4" cy="4" r="2.500" strokeDasharray="2 .8" />
        <circle cx="12" cy="11" r="4" strokeDasharray="2.500 .6" />
      </g>
    ),
  },
];

const Rollout = ({ title, children }: { title: string; children: React.ReactNode }) => (
  <section className="rounded-sm border border-[#3e3e3e] bg-[#4f4f4f]">
    <div className="flex h-5 items-center pr-[7px] pl-1.5">
      <svg width="6" height="5"><path d="M0 0h6L3 5z" fill="#b4b4b4" /></svg>
      <h2 className="ml-1.5 flex-1 text-[13px] leading-5 font-bold text-white">{title}</h2>
      <svg width="6" height="6" stroke="#989898" strokeDasharray="1 1.500"><path d="M0 .5h6M0 3h6M0 5.500h6" /></svg>
    </div>
    {children}
  </section>
);

const CommandPanel = () => (
  <aside className="mb-0.5 flex w-[214px] shrink-0 flex-col bg-[#444444] pl-[5px]">
    <Grip className="mt-0.5 mr-[3px] h-[3px]" />
    <div className="mt-[3px] flex">
      {panelTabs.map(({ name, art }, i) => (
        <button
          key={name}
          aria-label={name}
          className={`grid h-[27px] w-8 place-items-center rounded-t-md border ${
            i === 0 ? "border-[#3a3a3a] border-b-[#444444]" : "border-[#444444] border-b-[#383838] bg-[#393939]"
          }`}
        >
          <svg viewBox="0 0 20 20" width="17" height="17">{art}</svg>
        </button>
      ))}
      <span className="flex-1 border-b border-[#383838]" />
    </div>
    <div className="relative flex-1 border-l border-[#383838] pr-[5px] pl-[3px]">
      <div className="mb-0.5 flex h-[31px] items-center gap-px pt-0.5">
        {createKinds.map(({ name, art }, i) => (
          <button key={name} aria-label={name} className={`grid h-5 w-[21px] place-items-center rounded-sm ${i === 0 ? "bg-[#5089bb]" : ""}`}>
            <svg viewBox="0 0 18 18" width="17" height="17">{art}</svg>
          </button>
        ))}
      </div>
      <Combo label="类别" value="标准基本体" className="h-5" />
      <div className="mt-[5px] mr-1.5 flex flex-col gap-0.5">
        <Rollout title="对象类型">
          <label className="flex h-[21px] items-center gap-0.5 pl-12 text-[12px] text-[#8f8f8f]">
            <input type="checkbox" disabled className="h-3 w-3 appearance-none border border-[#444444] bg-[#525252]" />
            自动栅格
          </label>
          <div className="grid grid-cols-2 gap-x-[5px] gap-y-[5px] px-[15px] pb-[5px] text-[12px] leading-4 text-[#dfdf1e]">
            {primitives.map((name) => (
              <button key={name} className="h-4 rounded-[3px] bg-[#636363] outline outline-[#464646]">{name}</button>
            ))}
          </div>
        </Rollout>
        <Rollout title="名称和颜色">
          <div className="flex gap-[3px] px-5 pt-1.5 pb-[9px]">
            <input aria-label="名称" className="h-5 min-w-0 flex-1 border border-[#484848] bg-[#555555]" />
            <button aria-label="颜色" className="h-5 w-[17px] border border-black bg-[#c92a78]" />
          </div>
        </Rollout>
      </div>
      <svg width="9" height="58" className="absolute top-[230px] right-0">
        <rect x=".5" y=".5" width="14" height="57" rx="3" fill="#3a3a3a" stroke="#111" />
        <path d="M6 6v26" stroke="#1c1c1c" strokeWidth="5" strokeDasharray="1 2" />
        <path d="M6 32v7" stroke="#dfdf1e" strokeWidth="5" strokeDasharray="1 2" />
        <path d="M6 38v4" stroke="#bbb" strokeWidth="5" strokeDasharray="1 2" />
        <path d="M6 42v10" stroke={T} strokeWidth="5" strokeDasharray="1 2" />
      </svg>
    </div>
  </aside>
);

const Timeline = () => (
  <div className="flex h-[50px] shrink-0 bg-[#444444] pl-0.5">
    <Grip className="mt-[5px] mr-1 h-[43px] w-[3px]" />
    <div className="flex min-w-0 flex-1 flex-col">
      <div className="flex h-6 gap-0.5 pt-[3px] pl-px font-['Liberation_Mono',monospace] text-[11px] leading-4 text-[#dfdf1e]">
        <button aria-label="上一关键点" className="grid h-4 w-3.5 place-items-center rounded-[3px] bg-[#636363]">
          <svg width="5" height="9" fill="none" stroke="#dfdf1e"><path d="M4.500 0l-4 4.500 4 4.500" /></svg>
        </button>
        <button className="h-4 w-[123px] rounded-[3px] bg-[#636363]">0 / 100</button>
        <button aria-label="下一关键点" className="grid h-4 w-3.5 place-items-center rounded-[3px] bg-[#636363]">
          <svg width="5" height="9" fill="none" stroke="#dfdf1e"><path d="M.5 0l4 4.500L.5 9" /></svg>
        </button>
      </div>
      <div className="flex flex-1 border-t border-black">
        <button aria-label="迷你曲线编辑器" className="grid w-[51px] place-items-center pr-2">
          <svg width="16" height="14" fill="none">
            <path d="M2 1v12" stroke={W} strokeWidth="3" strokeDasharray="1.500 1" />
            <path d="M6 5q2-6 4 1 1 8 4 3l1-3" stroke={T} strokeWidth="1.300" />
          </svg>
        </button>
        <div className="relative mr-[50px] mb-px flex flex-1 justify-between bg-[#2a2a2a] pr-[7px] pl-[5px]">
          <span className="absolute top-px bottom-0 left-0.5 w-2 border border-[#2a2410] bg-[#9a8120]" />
          {Array.from({ length: 101 }, (_, f) => (
            <span key={f} className={`relative w-px bg-[#8a8a8a] ${f % 5 ? "h-[11px]" : "h-6"}`}>
              {f % 5 === 0 && (
                <span className={`flex justify-center pt-2.5 text-[11px] leading-[14px] ${f ? "text-[#cfcfcf]" : "text-[#e8e81e]"}`}>
                  <span>{f}</span>
                </span>
              )}
            </span>
          ))}
        </div>
      </div>
    </div>
  </div>
);

const playback: Record<string, string> = {
  转至开头: "M1 2h2v10H1zM3 7l5-5v10zM8 7l5-5v10z",
  上一帧: "M0 7l6-5v10zM7 2h2v10H7zM11 2h2v10h-2z",
  播放: "M1 0l12 7-12 7z",
  下一帧: "M1 2h2v10H1zM5 2h2v10H5zM8 2l6 5-6 5z",
  转至结尾: "M11 2h2v10h-2zM11 7L6 2v10zM6 7L1 2v10z",
};

const navTools: { name: string; art: React.ReactNode }[] = [
  { name: "缩放", art: <path d="M6 9l-4 6M14 6a4.500 4.500 0 1 1-9 0 4.500 4.500 0 0 1 9 0z" fill="none" stroke={W} strokeWidth="2" /> },
  {
    name: "缩放所有视图",
    art: (
      <>
        <path d="M8 1h3v3H8zM12 1h3v3h-3zM12 5h3v4h-3z" fill={T} />
        <path d="M5 10l-3 5M10 8a3 3 0 1 1-6 0 3 3 0 0 1 6 0z" fill="none" stroke={W} strokeWidth="2" />
      </>
    ),
  },
  {
    name: "最大化显示",
    art: (
      <>
        <path d="M1 4V1h3M12 1h3v3M15 12v3h-3M4 15H1v-3" fill="none" stroke={W} strokeWidth="1.500" />
        <path d="M8 3l5 2v6l-5 3-5-3V5z" fill={T} />
        <path d="M3 5l5 2 5-2M8 7v7" fill="none" stroke="#2b7070" />
      </>
    ),
  },
  {
    name: "所有视图最大化显示",
    art: (
      <>
        <path d="M9 2l3-2 3 2v9l-3 2-3-2z" fill={T} />
        <circle cx="4" cy="10" r="3" fill={W} />
        <path d="M3 15l5-4" stroke={W} strokeWidth="2" />
      </>
    ),
  },
  {
    name: "缩放区域",
    art: (
      <>
        <path d="M1 1h14v11H1z" fill="none" stroke={W} strokeWidth="1.500" strokeDasharray="2 1.500" />
        <path d="M6 10l-4 5M11 7a3 3 0 1 1-6 0 3 3 0 0 1 6 0z" fill="none" stroke={T} strokeWidth="1.800" />
      </>
    ),
  },
  { name: "平移", art: <path d="M3 8V3h1v4l1-6h1l1 5 1-5h1v6l2-4h1l-1 8-2 5H5L1 9l1-1z" fill={W} /> },
  {
    name: "环绕",
    art: (
      <>
        <ellipse cx="8" cy="8" rx="5" ry="6" fill={W} />
        <path d="M2 15Q14 12 13 1" fill="none" stroke={T} strokeWidth="2" />
        <path d="M4 12L12 4" stroke="#444" strokeWidth="2" />
      </>
    ),
  },
  {
    name: "最大化视口",
    art: (
      <>
        <path d="M1 1h14v14H1z" fill={W} />
        <path d="M8 2h6v6l-2-2-4 4-2-2 4-4zM2 10h4v4H2z" fill="#3a3a3a" />
      </>
    ),
  },
];

const StatusBar = () => (
  <footer className="flex h-14 shrink-0 items-start bg-[#444444] pl-1 text-[12px] leading-4 text-white">
    <div className="mt-[5px] flex w-[98px] flex-col">
      <input aria-label="宏录制器" className="h-[22px] border-2 border-t-[#6b6b6b] border-r-white border-b-white border-l-[#6b6b6b] bg-[#dcc3c3]" />
      <input
        aria-label="侦听器"
        defaultValue="MAXScript 迷·"
        className="h-[23px] border-2 border-t-[#6b6b6b] border-r-[#e8e8e8] border-b-[#e8e8e8] border-l-[#6b6b6b] bg-white pl-[3px] font-['Liberation_Mono','Noto_Sans_CJK_SC',monospace] text-[11px] text-[#777777]"
      />
    </div>
    <span className="mt-[3px] ml-[3px] h-[51px] w-[3px] border-r-2 border-black" />
    <div className="ml-[3px] flex-1">
      <p className="mt-[11px]">未选定任何对象</p>
      <p className="mt-[9px]">单击或单击并拖动以选择对象</p>
    </div>

    <div className="mr-11 w-[406px] pt-2">
      <div className="flex h-5 items-center">
        <button aria-label="孤立当前选择" className="w-[29px]">
          <svg width="16" height="16" fill="none" stroke="#262626" strokeWidth="1.500"><path d="M1 4V1h3M12 1h3v3M15 12v3h-3M4 15H1v-3M4 4h8v8H4z" /></svg>
        </button>
        <button aria-label="选择锁定" className="w-6">
          <svg width="12" height="16" fill="none" stroke="#262626" strokeWidth="1.500"><path d="M1 7h10v8H1zM3 7V3q3-4 6 0v4M6 10v3" /></svg>
        </button>
        <button aria-label="绝对模式变换输入" className="w-[22px]">
          <svg width="14" height="16" fill="none" stroke={W}><path d="M1 1h12v14H1z" strokeWidth="1.500" /><circle cx="7" cy="8" r="3" strokeWidth="2" /><path d="M7 2v3M7 11v3M1 8h3M10 8h3" strokeWidth="2" /></svg>
        </button>
        {["X", "Y", "Z"].map((axis) => (
          <React.Fragment key={axis}>
            <label htmlFor={`pos${axis}`} className="w-4 font-['Liberation_Mono',monospace] text-[11px]">{axis}:</label>
            <input id={`pos${axis}`} className="mr-3 h-[18px] w-[58px] bg-[#585858] outline outline-[#3e3e3e]" />
          </React.Fragment>
        ))}
        <span className="ml-1 whitespace-nowrap">栅格 = 10.0</span>
      </div>
      <button className="mt-1 ml-[311px] flex items-center gap-1 whitespace-nowrap text-[#dfdf1e]">
        <span className="grid h-5 w-[21px] place-items-center rounded-[3px] bg-[#5089bb]">
          <svg width="14" height="14" fill="none" stroke="#e0e8ee"><path d="M7 1l5 3v6l-5 3-5-3V4zM2 4l5 3 5-3M7 7v6" /></svg>
        </span>
        添加时间标记
      </button>
    </div>

    <div className="mr-4 flex w-28 flex-col gap-1 pt-[9px]">
      <div className="flex h-4 items-center justify-between">
        {Object.entries(playback).map(([name, d]) => (
          <button key={name} aria-label={name}><svg width="14" height="14"><path d={d} fill={W} /></svg></button>
        ))}
      </div>
      <div className="flex items-center justify-between">
        <button aria-label="关键点模式" className="pl-0.5"><svg width="12" height="10"><path d="M0 5l4-4v8zM11 5L7 1v8zM5 0h1v10H5z" fill={W} /></svg></button>
        <div className="flex h-[17px] w-[70px] items-center bg-[#636363] pr-1 outline outline-[#3a3a3a]">
          <input aria-label="当前帧" defaultValue="0" className="min-w-0 flex-1 pl-1 text-[#dfdf1e]" />
          <svg width="5" height="10" fill="#dfdf1e"><path d="M0 4l2.500-4L5 4zM0 6h5l-2.500 4z" /></svg>
        </div>
        <button aria-label="时间配置">
          <svg width="15" height="15"><circle cx="6" cy="6" r="5.500" fill={W} /><path d="M6 2v4h3" stroke="#444" fill="none" /><circle cx="10.500" cy="10.500" r="3" fill="none" stroke={G} strokeWidth="2.500" /></svg>
        </button>
      </div>
    </div>

    <div className="mt-[7px] flex gap-[5px] text-[#dfdf1e]">
      <button aria-label="设置关键点" className="grid h-[42px] w-10 place-items-center rounded bg-[#636363] outline outline-[#3e3e3e]">
        <svg width="30" height="30">
          <path d="M9 2h5v9h9v5h-9v9H9v-9H0v-5h9z" fill={W} />
          <path d="M20 21l7-7M24 16l3 3M18 20a3 3 0 1 0 .1.100" fill="none" stroke={T} strokeWidth="2.500" />
        </svg>
      </button>
      <div className="flex w-[65px] flex-col gap-0.5">
        <button className="h-5 rounded-[3px] bg-[#636363] whitespace-nowrap outline outline-[#3e3e3e]">自动关键点</button>
        <button className="h-5 rounded-[3px] bg-[#636363] whitespace-nowrap outline outline-[#3e3e3e]">设置关键点</button>
      </div>
      <div className="flex w-[111px] flex-col gap-1">
        <Combo label="选择集" value="选定对象" className="h-[18px]" />
        <div className="flex justify-between">
          <button aria-label="新关键点的默认入/出切线" className="pl-1">
            <svg width="18" height="18" fill="none"><path d="M2 16Q4 4 8 4t7 12" stroke={T} strokeWidth="2" /><path d="M2 4h13M7 2h4v4H7z" stroke={W} /><path d="M18 14v4h-4z" fill="#dfdf1e" /></svg>
          </button>
          <button className="h-5 w-[85px] rounded-[3px] bg-[#636363] whitespace-nowrap outline outline-[#3e3e3e]">关键点过滤器...</button>
        </div>
      </div>
    </div>

    <div className="mt-1.5 mr-2.5 ml-3.5 grid grid-cols-4">
      {navTools.map(({ name, art }, i) => (
        <button key={name} aria-label={name} className="relative grid h-[22px] w-[23px] place-items-center">
          <svg width="16" height="16">{art}</svg>
          {[2, 3, 5, 6].includes(i) && (
            <svg width="4" height="4" className="absolute right-0 bottom-0"><path d="M4 0v4H0z" fill="#dfdf1e" /></svg>
          )}
        </button>
      ))}
    </div>
  </footer>
);

const App = () => (
  <div className="flex h-screen flex-col overflow-hidden bg-[#444444] font-['Liberation_Sans','Noto_Sans_CJK_SC',sans-serif]">
    <TitleBar />
    <MenuBar />
    <Toolbar />
    <div className="flex min-h-0 flex-1">
      <SideStrip />
      <RenderPanel />
      <Viewports />
      <CommandPanel />
    </div>
    <Timeline />
    <StatusBar />
    <div className="flex h-2 shrink-0 bg-[#17344f]">
      <span className="ml-[1001px] w-40 bg-[#86664a]" />
      <span className="w-40 bg-[#0c5793]" />
      <span className="mr-[73px] ml-auto pt-1 text-[12px] leading-3 whitespace-nowrap text-white">16:38 星期</span>
    </div>
  </div>
);

export default App;
